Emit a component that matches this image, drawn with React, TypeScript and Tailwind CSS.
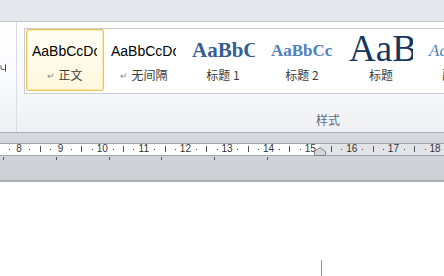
import React from "react";

const UNIT = 41.6;

function Ruler() {
  const nums = [8, 9, 10, 11, 12, 13, 14, 15, 16, 17, 18];
  const marks: React.ReactNode[] = [];
  for (let i = -1; i < nums.length; i++) {
    const base = 19 + i * UNIT;
    if (i >= 0) {
      marks.push(
        <span
          key={"n" + i}
          className="absolute top-[-1px] text-[10px] leading-[12px] text-[#333] -translate-x-1/2"
          style={{ left: base }}
        >
          {nums[i]}
        </span>
      );
    }
    marks.push(
      <span key={"d1" + i} className="absolute top-[5px] w-[1px] h-[1px] bg-[#444]" style={{ left: base + 10.4 }} />
    );
    marks.push(
      <span key={"t" + i} className="absolute top-[2px] w-[1px] h-[6px] bg-[#555]" style={{ left: base + 20.8 }} />
    );
    marks.push(
      <span key={"d2" + i} className="absolute top-[5px] w-[1px] h-[1px] bg-[#444]" style={{ left: base + 31.2 }} />
    );
  }
  return (
    <div className="relative h-[13px] border-y border-[#9ea5ae] bg-white font-['Liberation_Sans',sans-serif]">
      <div className="absolute left-[320px] right-0 top-0 bottom-0 bg-[#e2e4e7]" />
      {marks}
      <svg className="absolute left-[314px] top-[3px]" width="12" height="9" viewBox="0 0 12 9">
        <path d="M0.5 8.5 V4.5 L6 0.5 L11.5 4.5 V8.5 Z" fill="#d4d7db" stroke="#7d848c" />
      </svg>
    </div>
  );
}

function Item({
  selected,
  preview,
  label,
  ret,
}: {
  selected?: boolean;
  preview: React.ReactNode;
  label: string;
  ret?: boolean;
}) {
  return (
    <div
      className={
        "w-[78px] h-[62px] shrink-0 flex flex-col rounded-[2px] " +
        (selected
          ? "border border-[#e9c563] shadow-[inset_0_0_0_1px_#fde8a6] bg-gradient-to-b from-[#fffdf5] to-[#fff8de]"
          : "border border-transparent")
      }
    >
      <div className="h-[42px] shrink-0 ml-[5px] mr-[6px] flex items-center overflow-hidden whitespace-nowrap">
        {preview}
      </div>
      <div className="-mt-[5px] flex items-start justify-center text-[12px] leading-[16px] text-[#3b3b3b] font-['Noto_Sans_CJK_SC',sans-serif]">
        {ret && <span className="text-[9px] text-[#8a8a8a] mr-[3px] mt-[1px]">↵</span>}
        <span>{label}</span>
      </div>
    </div>
  );
}

export default function App() {
  return (
    <div className="w-[444px] h-[276px] overflow-hidden flex flex-col bg-white">
      <div className="h-[22px] shrink-0 bg-[#e4e7eb] border-b border-[#c5cad1]" />
      <div className="h-[111px] shrink-0 flex bg-gradient-to-b from-[#ffffff] via-[#fafbfc] to-[#eef0f3] border-b border-[#a9b0b9]">
        <div className="w-[17px] shrink-0 border-r border-[#d9dde3] relative">
          <svg className="absolute left-0 top-[42px]" width="8" height="8" viewBox="0 0 8 8">
            <path d="M1 1.5 V3.5 Q1 5.5 3 5.5 H4.5" fill="none" stroke="#444" strokeWidth="1" />
            <path d="M5.5 0.5 V7.5" fill="none" stroke="#444" strokeWidth="1" />
          </svg>
          <svg className="absolute left-[3px] top-[116px]" width="8" height="8" viewBox="0 0 8 8">
            <path d="M0.5 6 V0.5 H6" fill="none" stroke="#8a9099" />
            <path d="M3 7 H7 V3 Z" fill="#6e757e" />
          </svg>
        </div>
        <div className="flex-1 flex flex-col pt-[6px] pl-[7px]">
          <div className="h-[66px] flex gap-[1px] border border-r-0 border-[#c7cdd5] bg-white pl-[1px] overflow-hidden">
            <Item
              selected
              ret
              label="正文"
              preview={
                <span className="text-[14px] text-black font-['Liberation_Sans',sans-serif]">AaBbCcDc</span>
              }
            />
            <Item
              ret
              label="无间隔"
              preview={
                <span className="text-[14px] text-black font-['Liberation_Sans',sans-serif]">AaBbCcDc</span>
              }
            />
            <Item
              label="标题 1"
              preview={
                <span className="pl-[2px] text-[21px] font-bold text-[#365f91] font-['Liberation_Serif',serif]">AaBbCc</span>
              }
            />
            <Item
              label="标题 2"
              preview={
                <span className="pl-[2px] text-[17px] font-bold text-[#4f81bd] font-['Liberation_Serif',serif]">AaBbCc</span>
              }
            />
            <Item
              label="标题"
              preview={
                <span className="pl-[1px] -mt-[4px] text-[37px] leading-[34px] text-[#17365d] font-['Liberation_Serif',serif]">AaB</span>
              }
            />
            <Item
              label="副标题"
              preview={
                <span className="pl-[2px] text-[17px] italic text-[#4f81bd] font-['Liberation_Serif',serif]">AaBbCc</span>
              }
            />
          </div>
          <div className="mt-[19px] pl-[292px] text-[12px] leading-[14px] text-[#5d6b82] font-['Noto_Sans_CJK_SC',sans-serif]">
            样式
          </div>
        </div>
      </div>
      <div className="h-[47px] shrink-0 bg-gradient-to-b from-[#d6d9dd] to-[#cbcfd4] pt-[10px] relative">
        <Ruler />
        {[3, 56, 109, 161, 214, 267].map((x) => (
          <span key={x} className="absolute top-[24px] w-[1px] h-[3px] bg-[#555]" style={{ left: x }} />
        ))}
      </div>
      <div className="flex-1 border-t-2 border-[#a8aeb5] bg-white relative">
        <div className="absolute left-[321px] top-[78px] bottom-0 w-[1px] bg-[#8d939a]" />
      </div>
    </div>
  );
}
